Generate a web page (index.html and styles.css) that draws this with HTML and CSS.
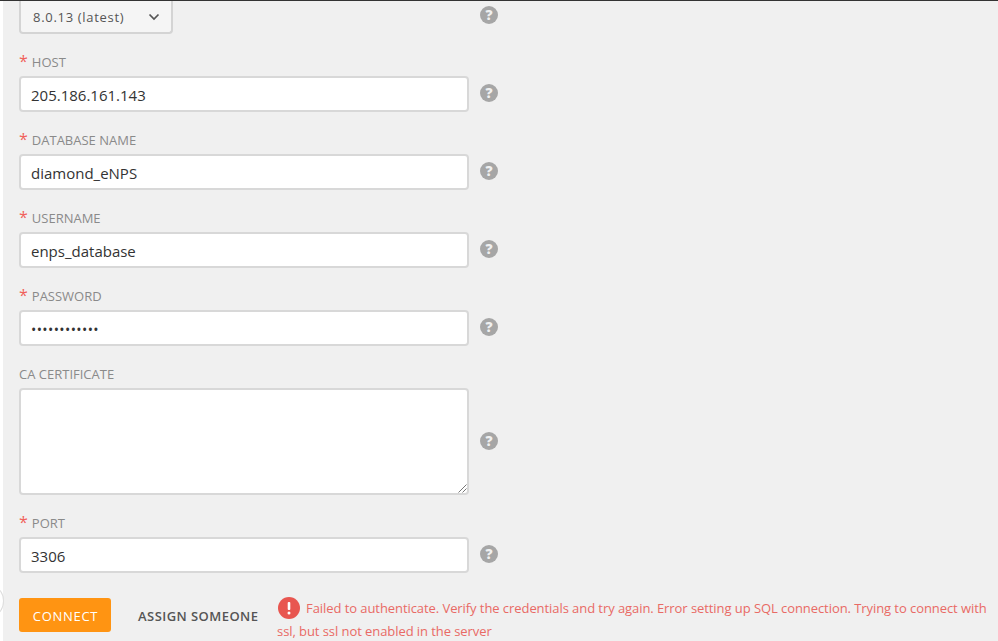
FILE: index.html
```html
<!DOCTYPE html>
<html lang="en">

<head>
    <meta charset="UTF-8">
    <meta name="viewport" content="width=device-width, initial-scale=1.0">
    <title>Database connection</title>
    <link rel="stylesheet" href="styles.css">
</head>

<body>
    <div class="topline"></div>
    <span class="side-handle"></span>
    <main class="panel">
        <div class="row row-select">
            <div class="select">
                <span>8.0.13 (latest)</span>
                <svg class="chevron" width="12" height="8" viewBox="0 0 12 8">
                    <path d="M1.5 1.5 6 6l4.5-4.5" fill="none" stroke="#555" stroke-width="1.7" />
                </svg>
            </div>
            <span class="help">?</span>
        </div>

        <label class="label"><span class="req">*</span>HOST</label>
        <div class="row">
            <div class="input">205.186.161.143</div>
            <span class="help">?</span>
        </div>

        <label class="label"><span class="req">*</span>DATABASE NAME</label>
        <div class="row">
            <div class="input">diamond_eNPS</div>
            <span class="help">?</span>
        </div>

        <label class="label"><span class="req">*</span>USERNAME</label>
        <div class="row">
            <div class="input">enps_database</div>
            <span class="help">?</span>
        </div>

        <label class="label"><span class="req">*</span>PASSWORD</label>
        <div class="row">
            <div class="input input-pass">••••••••••••</div>
            <span class="help">?</span>
        </div>

        <label class="label">CA CERTIFICATE</label>
        <div class="row">
            <div class="input textarea">
                <svg class="grip" width="9" height="9" viewBox="0 0 9 9">
                    <path d="M0.5 8.5 8.5 0.5M4.5 8.5 8.5 4.5" stroke="#777" stroke-width="1" fill="none" />
                </svg>
            </div>
            <span class="help">?</span>
        </div>

        <label class="label"><span class="req">*</span>PORT</label>
        <div class="row">
            <div class="input">3306</div>
            <span class="help">?</span>
        </div>

        <div class="actions">
            <button class="connect">CONNECT</button>
            <button class="assign">ASSIGN SOMEONE</button>
            <p class="error">
                <svg class="error-icon" width="22" height="22" viewBox="0 0 22 22">
                    <circle cx="11" cy="11" r="11" fill="#e85650" />
                    <rect x="9.7" y="5" width="2.6" height="8" rx="1" fill="#fff" />
                    <circle cx="11" cy="16" r="1.5" fill="#fff" />
                </svg>Failed to authenticate. Verify the credentials and try again. Error setting up SQL connection. Trying to connect with ssl, but ssl not enabled in the server
            </p>
        </div>
    </main>
</body>

</html>
```

FILE: styles.css
```css
* {
    margin: 0;
    padding: 0;
    box-sizing: border-box;
}

html,
body {
    height: 100%;
    overflow: hidden;
}

body {
    background-color: #ffffff;
    font-family: "Open Sans", sans-serif;
    color: #333;
    position: relative;
}

.topline {
    height: 1px;
    background-color: #333;
}

/* little round thing poking in from the left */
.side-handle {
    position: absolute;
    left: -16px;
    top: 587px;
    width: 20px;
    height: 28px;
    border-radius: 50%;
    background-color: #fff;
    border: 1px solid #ddd;
}

.panel {
    margin-left: 3px;
    height: 640px;
    background-color: #f0f0f0;
    padding-left: 16px;
    overflow: hidden;
}

.row {
    display: flex;
    align-items: center;
    gap: 11px;
}

.row .help {
    flex: none;
    margin-top: -2px;
}

.row-select {
    height: 33px;
    align-items: flex-start;
}

.select {
    width: 154px;
    height: 33px;
    display: flex;
    align-items: center;
    justify-content: space-between;
    padding: 0 11px 0 12px;
    background-color: #f5f5f5;
    border: 2px solid #d4d4d4;
    border-top: none;
    border-radius: 0 0 4px 4px;
    font-size: 13px;
    letter-spacing: 0.7px;
    color: #555;
}

.row-select .help {
    margin-left: 296px;
    margin-top: 5px;
}

.label {
    display: block;
    height: 42px;
    padding-top: 18px;
    font-size: 13px;
    line-height: 20px;
    color: #8a8a8a;
    font-kerning: none;
}

.req {
    color: #f0605a;
    font-size: 16px;
    line-height: 16px;
    margin-right: 4px;
}

.input {
    width: 450px;
    height: 36px;
    padding: 0 10px;
    background-color: #fff;
    border: 2px solid #d8d8d8;
    border-radius: 4px;
    font-size: 15px;
    line-height: 35px;
    color: #333;
}

.input-pass {
    font-size: 14px;
    letter-spacing: 0.4px;
}

.textarea {
    height: 107px;
    position: relative;
}

.grip {
    position: absolute;
    right: 0;
    bottom: 0;
}

.help {
    width: 18px;
    height: 18px;
    border-radius: 50%;
    background-color: #a6a6a6;
    color: #f0f0f0;
    font-size: 14px;
    font-weight: 800;
    line-height: 18px;
    text-align: center;
}

.actions {
    display: flex;
    align-items: flex-start;
    margin-top: 25px;
}

.connect {
    flex: none;
    width: 92px;
    height: 34px;
    padding: 1px 0 0 1px;
    background-color: #ff9412;
    border: none;
    border-radius: 3px;
    color: #fff;
    font-family: inherit;
    font-size: 13px;
    font-weight: 500;
    letter-spacing: 0.7px;
}

.assign {
    flex: none;
    width: 166px;
    height: 34px;
    padding: 1px 0 0 27px;
    text-align: left;
    background: none;
    border: none;
    color: #555;
    font-family: inherit;
    font-size: 13px;
    font-weight: 600;
    letter-spacing: 0.45px;
}

.error {
    color: #e96a65;
    font-size: 13px;
    line-height: 23px;
    letter-spacing: -0.07px;
    margin-top: -1px;
    width: 715px;
}

.error-icon {
    margin-left: 1px;
    margin-right: 6px;
    vertical-align: -6px;
}
```
